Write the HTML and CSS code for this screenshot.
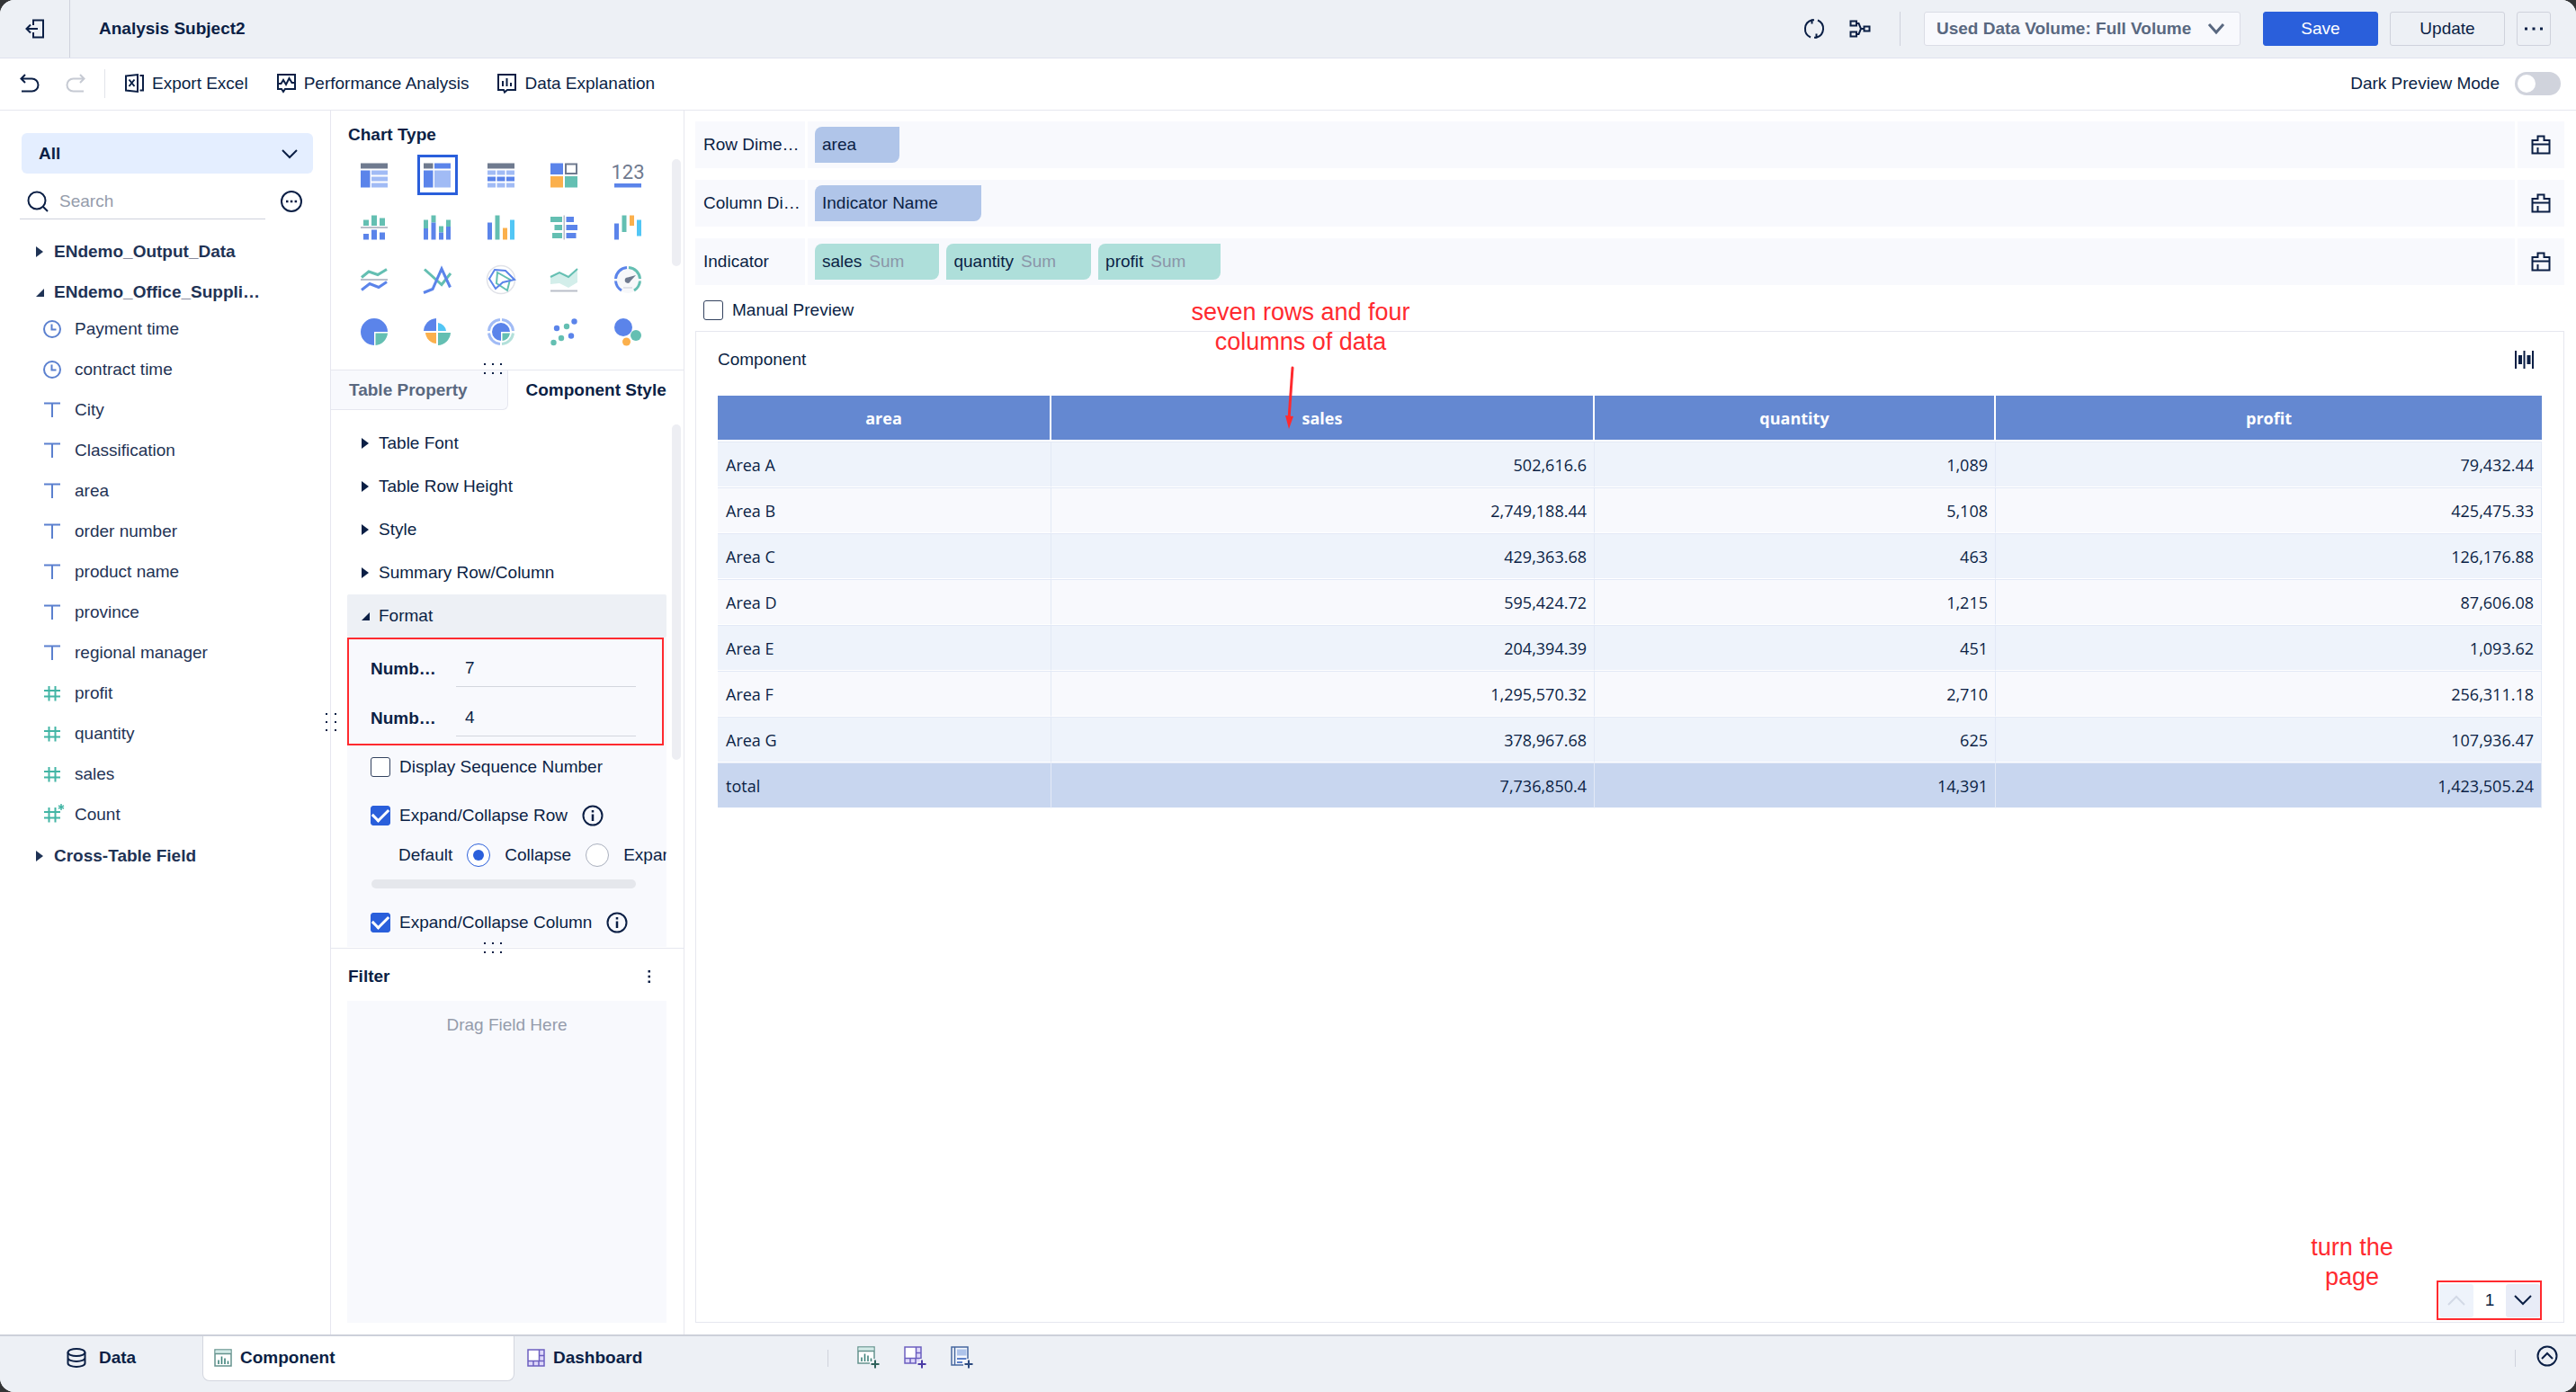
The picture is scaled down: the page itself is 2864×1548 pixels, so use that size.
FILE: index.html
```html
<!DOCTYPE html>
<html lang="en">
<head>
<meta charset="utf-8">
<title>Analysis Subject2</title>
<link rel="stylesheet" href="styles.css">
</head>
<body>
<div class="app">
  <header class="topbar">
    <button class="icon-btn exit" aria-label="Exit"><svg class="ic" width="22" height="22" viewBox="0 0 22 22"><path d="M9 7V1.500H20V20.500H9V15M14 11H1.500M6 6.500L1.500 11L6 15.500"/></svg></button>
    <h1 class="title">Analysis Subject2</h1>
    <div class="topbar-actions">
      <button class="icon-btn" aria-label="Refresh"><svg class="ic" width="24" height="24" viewBox="0 0 24 24"><path d="M9.500 6.500V2.200A10.300 10.300 0 0 0 8 21.500M14.500 17.500V21.800A10.300 10.300 0 0 0 16 2.500M9.500 2.200H12M14.500 21.800H12"/></svg></button>
      <button class="icon-btn flow" aria-label="Lineage"><svg class="ic" width="24" height="24" viewBox="0 0 24 24"><path d="M1.500 3.500H8V8.500H1.500ZM1.500 15.500H8V20.500H1.500ZM16.500 9.500H22.500V14.500H16.500ZM8 6H10.500L13 12H16.500M8 18H10.500L13 12"/></svg></button>
      <span class="vline"></span>
      <span class="select volume">
        <select aria-label="Used data volume"><option>Used Data Volume: Full Volume</option></select>
        <svg class="ic chev" width="20" height="20" viewBox="0 0 20 20"><path d="M2 5L10 14L18 5"/></svg>
      </span>
      <button class="btn primary">Save</button>
      <button class="btn">Update</button>
      <button class="btn more" aria-label="More"><svg width="20" height="4" viewBox="0 0 20 4"><path fill="currentColor" d="M0 .500h3v3H0zM8.500 .500h3v3h-3zM17 .500h3v3h-3z"/></svg></button>
    </div>
  </header>

  <div class="toolbar">
    <button class="icon-btn" aria-label="Undo"><svg class="ic" width="22" height="22" viewBox="0 0 22 22"><path d="M6 1L1.500 5.500L6 10M1.500 5.500H13.500A6.500 6.500 0 0 1 13.500 19.500H2"/></svg></button>
    <button class="icon-btn redo" aria-label="Redo" disabled><svg class="ic" width="22" height="22" viewBox="0 0 22 22"><path d="M16 1L20.500 5.500L16 10M20.500 5.500H8.500A6.500 6.500 0 0 0 8.500 19.500H20"/></svg></button>
    <span class="vline"></span>
    <button class="tool"><svg class="ic" width="21" height="21" viewBox="0 0 21 21"><path d="M1 2.500L14 1V20L1 18.500ZM16.500 2H20V18.500H16.500M4.500 6.500L10.500 14M10.500 6.500L4.500 14"/></svg>Export Excel</button>
    <button class="tool"><svg class="ic" width="21" height="21" viewBox="0 0 21 21"><path d="M1 1H20V17H9L7 20L5 17H1ZM1 11H4.500L7 7L10 12L13.500 5L16.500 10H20"/></svg>Performance Analysis</button>
    <button class="tool"><svg class="ic" width="21" height="21" viewBox="0 0 21 21"><path d="M1 1H20V18H11L8 20.500L7 18H1ZM6 8V14M10.500 5V14M15 10V14"/></svg>Data Explanation</button>
    <label class="dark-mode">Dark Preview Mode<input type="checkbox" role="switch" class="switch"></label>
  </div>

  <div class="workspace">
    <aside class="fields-panel">
      <span class="select all">
        <select aria-label="Data source"><option>All</option></select>
        <svg class="ic chev" width="20" height="20" viewBox="0 0 20 20"><path d="M2 6L10 14L18 6"/></svg>
      </span>
      <div class="search-row">
        <label class="search"><svg class="ic" width="24" height="24" viewBox="0 0 24 24"><circle cx="11" cy="11" r="9.500"/><path d="M18 18L23 23"/></svg><input type="text" placeholder="Search" aria-label="Search"></label>
        <button class="icon-btn" aria-label="More"><svg class="ic" width="24" height="24" viewBox="0 0 24 24"><circle cx="12" cy="12" r="11"/><path d="M6 12h2.500M10.800 12h2.500M15.600 12h2.500" stroke-width="2.500"/></svg></button>
      </div>
      <div class="tree">
        <div class="group"><button class="node"><i class="caret"></i>ENdemo_Output_Data</button></div>
        <div class="group">
          <button class="node"><i class="caret open"></i>ENdemo_Office_Suppli…</button>
          <ul class="fields">
            <li><svg class="ic date"><use href="#i-clock"/></svg>Payment time</li>
            <li><svg class="ic date"><use href="#i-clock"/></svg>contract time</li>
            <li><svg class="ic text"><use href="#i-text"/></svg>City</li>
            <li><svg class="ic text"><use href="#i-text"/></svg>Classification</li>
            <li><svg class="ic text"><use href="#i-text"/></svg>area</li>
            <li><svg class="ic text"><use href="#i-text"/></svg>order number</li>
            <li><svg class="ic text"><use href="#i-text"/></svg>product name</li>
            <li><svg class="ic text"><use href="#i-text"/></svg>province</li>
            <li><svg class="ic text"><use href="#i-text"/></svg>regional manager</li>
            <li><svg class="ic num"><use href="#i-hash"/></svg>profit</li>
            <li><svg class="ic num"><use href="#i-hash"/></svg>quantity</li>
            <li><svg class="ic num"><use href="#i-hash"/></svg>sales</li>
            <li><svg class="ic num"><use href="#i-hash"/><path d="M20 -2V5M17 0L23 3M23 0L17 3" stroke-width="1.500"/></svg>Count</li>
          </ul>
        </div>
        <div class="group"><button class="node"><i class="caret"></i>Cross-Table Field</button></div>
      </div>
    </aside>

    <section class="config-panel">
      <svg class="grip side" width="14" height="20" viewBox="0 0 14 20"><path d="M1 0h2v2H1zM11 0h2v2h-2zM1 9h2v2H1zM11 9h2v2h-2zM1 18h2v2H1zM11 18h2v2h-2z"/></svg>
      <div class="charts">
        <h2>Chart Type</h2>
        <div class="chart-grid">
          <button aria-label="Group table"><svg viewBox="0 0 30 30"><path fill="#6f7a8f" d="M0 1.500h30v6H0z"/><path fill="#5b84ea" d="M0 9.500h10.500v19H0z"/><path fill="#a1bbf5" d="M12 9.500h18v5H12zM12 16.500h18v5H12zM12 23.500h18v5H12z"/></svg></button>
          <button class="selected" aria-label="Cross table"><svg viewBox="0 0 30 30"><path fill="#6f7a8f" d="M0 1.500h10.500v6H0z"/><path fill="#5b84ea" d="M12 1.500h18v6H12zM0 9.500h10.500v19H0z"/><path fill="#a1bbf5" d="M12 9.500h18v19H12z"/></svg></button>
          <button aria-label="Detail table"><svg viewBox="0 0 30 30"><path fill="#6f7a8f" d="M0 1.500h30v6H0z"/><path fill="#a1bbf5" d="M0 9.500h9v5H0zM10.500 9.500h9v5h-9zM21 9.500h9v5h-9zM0 23.500h9v5H0zM10.500 23.500h9v5h-9zM21 23.500h9v5h-9z"/><path fill="#5b84ea" d="M0 16.500h9v5H0zM10.500 16.500h9v5h-9zM21 16.500h9v5h-9z"/></svg></button>
          <button aria-label="Color table"><svg viewBox="0 0 30 30"><path fill="#5b84ea" d="M0 1.500h14v12.500H0z"/><path fill="none" stroke="#6f7a8f" stroke-width="2" d="M17 2.500h12v10.500H17z"/><path fill="#fbb04c" d="M0 16h14v12.500H0z"/><path fill="#64bfb2" d="M16 16h14v12.500H16z"/></svg></button>
          <button aria-label="KPI card"><svg viewBox="0 0 30 30"><text x="15" y="19" text-anchor="middle" class="kpi">123</text><path fill="#5b84ea" d="M0 24h30v4.500H0z"/></svg></button>

          <button aria-label="Multi-series column"><svg viewBox="0 0 30 30"><path fill="#64bfb2" d="M3 6.500h6v6.500H3zM12 1.500h6V13h-6zM21 4.500h6V13h-6z"/><path fill="#b9bec9" d="M0 14h30v2H0z"/><path fill="#5b84ea" d="M3 22h6v6.500H3zM12 17.500h6v11h-6zM21 20.500h6v8h-6z"/></svg></button>
          <button aria-label="Stacked column"><svg viewBox="0 0 30 30"><path fill="#64bfb2" d="M0 6.500h5V16H0zM8.500 1.500h5V9.500h-5zM17 13.500h5V20.500h-5zM25 6.500h5V14h-5z"/><path fill="#5b84ea" d="M0 16h5v12.500H0zM8.500 9.500h5v19h-5zM17 20.500h5v8h-5zM25 14h5v14.500h-5z"/></svg></button>
          <button aria-label="Column"><svg viewBox="0 0 30 30"><path fill="#5b84ea" d="M0 9.500h5v19H0z"/><path fill="#64bfb2" d="M8.500 1.500h5v27h-5z"/><path fill="#fbb04c" d="M17 15.500h5v13h-5z"/><path fill="#52c6f5" d="M25 6.500h5v22h-5z"/></svg></button>
          <button aria-label="Butterfly bar"><svg viewBox="0 0 30 30"><path fill="#64bfb2" d="M0 3h13v6H0zM4.500 12H13v6H4.500zM2 21h11v6H2z"/><path fill="#b9bec9" d="M14.500 1.500h1.500v27h-1.500z"/><path fill="#5b84ea" d="M17.500 3H26v6h-8.500zM17.500 12H30v6H17.500zM17.500 21H28.500v6h-11z"/></svg></button>
          <button aria-label="Waterfall"><svg viewBox="0 0 30 30"><path fill="#5b84ea" d="M0 10.500h5v18H0z"/><path fill="#64bfb2" d="M8.500 1.500h5v18.500h-5z"/><path fill="#fbb04c" d="M17 1.500h5V13h-5z"/><path fill="#52c6f5" d="M25 6.500h5v18h-5z"/></svg></button>

          <button aria-label="Multi-series line"><svg class="draw" viewBox="0 0 30 30"><path stroke="#64bfb2" d="M1 12.500L9 6L19 9.500L29 3.500"/><path stroke="#b9bec9" stroke-width="2" d="M0 15h30"/><path stroke="#5b84ea" d="M1 26.500L10 19.500L20 23.500L29 17.500"/></svg></button>
          <button aria-label="Line"><svg class="draw" viewBox="0 0 30 30"><path stroke="#64bfb2" d="M1 3.500L20 20.500L30 8"/><path stroke="#5b84ea" d="M0 29.500L10 25.500L20 3L29.500 23.500"/></svg></button>
          <button aria-label="Radar"><svg class="draw" viewBox="0 0 30 30"><circle cx="15" cy="15" r="15.500" stroke="#e0e2e8" stroke-width="1.500"/><path stroke="#64bfb2" stroke-width="2" d="M11 7L25 15L22 27L10 19Z"/><path stroke="#5b84ea" stroke-width="2" d="M8 4L20 5L30 15L17 18L9 25L2 14Z"/></svg></button>
          <button aria-label="Area"><svg class="draw" viewBox="0 0 30 30"><path fill="#d3eeea" d="M0 12L10 7L20 12L30 3V18L20 24L10 19L0 20Z"/><path stroke="#64bfb2" stroke-width="2" d="M0 12L10 7L20 12L30 3"/><path stroke="#b9bec9" stroke-width="2" d="M0 27.500h30"/></svg></button>
          <button aria-label="Gauge"><svg class="draw" viewBox="0 0 30 30"><circle cx="15" cy="15" r="15" fill="#f7f8fa"/><path stroke="#5b84ea" d="M14 1.500A13.500 13.500 0 0 0 1.500 14M1.500 16.500A13.500 13.500 0 0 0 8 27"/><path stroke="#64bfb2" d="M16 1.500A13.500 13.500 0 0 1 28.500 14M28.500 16.500A13.500 13.500 0 0 1 22 27"/><path fill="#6f7a8f" d="M24 10L18 16.500A3.200 3.200 0 1 1 15 12.500Z"/><path stroke="#dfe2e8" stroke-width="2" d="M10 24h10"/></svg></button>

          <button aria-label="Pie"><svg viewBox="0 0 30 30"><path fill="#5b84ea" d="M15 0A15 15 0 0 0 15 30V15H30A15 15 0 0 0 15 0Z"/><path fill="#64bfb2" d="M16.500 16.500H30A15 15 0 0 1 16.500 30Z"/></svg></button>
          <button aria-label="Rose"><svg viewBox="0 0 30 30"><path fill="#5b84ea" d="M14 0A15 15 0 0 0 0 14H14Z"/><path fill="#52c6f5" d="M16 5A10 10 0 0 1 25 14H16Z"/><path fill="#fbb04c" d="M2 16H14V28A13 13 0 0 1 2 16Z"/><path fill="#64bfb2" d="M16 16H30A15 15 0 0 1 16 30Z"/></svg></button>
          <button aria-label="Multi-layer pie"><svg class="draw" viewBox="0 0 30 30"><path stroke="#a1bbf5" d="M14 1.500A13.500 13.500 0 0 0 1.500 14M1.500 16.500A13.500 13.500 0 0 0 14 28.500M16 1.500A13.500 13.500 0 0 1 28.500 14"/><path stroke="#b3e0da" d="M28.500 16.500A13.500 13.500 0 0 1 16 28.500"/><path fill="#5b84ea" d="M15 5A10 10 0 0 0 15 25V15H25A10 10 0 0 0 15 5Z"/><path fill="#64bfb2" d="M16.500 16.500H25A10 10 0 0 1 16.500 25Z"/></svg></button>
          <button aria-label="Scatter"><svg viewBox="0 0 30 30"><g fill="#5b84ea"><circle cx="7" cy="11" r="3.200"/><circle cx="26.500" cy="3.500" r="3.200"/><circle cx="23" cy="19.500" r="3.200"/></g><g fill="#64bfb2"><circle cx="18" cy="9" r="3.200"/><circle cx="12" cy="22" r="3.200"/><circle cx="3.500" cy="27" r="3.200"/></g></svg></button>
          <button aria-label="Bubble"><svg viewBox="0 0 30 30"><circle cx="10" cy="10" r="10" fill="#5b84ea"/><circle cx="24" cy="19" r="6" fill="#64bfb2"/><circle cx="13.500" cy="26" r="4.500" fill="#fbb04c"/></svg></button>
        </div>
        <span class="scroll charts-scroll"></span>
        <svg class="grip" width="22" height="14" viewBox="0 0 22 14"><path d="M1 1h2v2H1zM10 1h2v2h-2zM19 1h2v2h-2zM1 11h2v2H1zM10 11h2v2h-2zM19 11h2v2h-2z"/></svg>
      </div>

      <div class="tabs">
        <button class="tab">Table Property</button>
        <button class="tab active">Component Style</button>
      </div>

      <div class="settings">
        <button class="section"><i class="caret"></i>Table Font</button>
        <button class="section"><i class="caret"></i>Table Row Height</button>
        <button class="section"><i class="caret"></i>Style</button>
        <button class="section"><i class="caret"></i>Summary Row/Column</button>
        <button class="section current"><i class="caret open"></i>Format</button>
        <div class="section-body">
          <label class="number">Numb…<input type="text" value="7"></label>
          <label class="number">Numb…<input type="text" value="4"></label>
          <div class="option"><label><input type="checkbox">Display Sequence Number</label></div>
          <div class="option"><label><input type="checkbox" checked>Expand/Collapse Row</label><svg class="ic info"><use href="#i-info"/></svg></div>
          <div class="default-row">
            <span>Default</span>
            <label><input type="radio" name="def" checked>Collapse</label>
            <label><input type="radio" name="def">Expand</label>
          </div>
          <div class="hscroll"></div>
          <div class="option"><label><input type="checkbox" checked>Expand/Collapse Column</label><svg class="ic info"><use href="#i-info"/></svg></div>
          <span class="mark-box"></span>
        </div>
        <span class="scroll settings-scroll"></span>
      </div>

      <div class="filter">
        <svg class="grip top" width="22" height="14" viewBox="0 0 22 14"><path d="M1 1h2v2H1zM10 1h2v2h-2zM19 1h2v2h-2zM1 11h2v2H1zM10 11h2v2h-2zM19 11h2v2h-2z"/></svg>
        <div class="filter-head"><h2>Filter</h2><button class="icon-btn" aria-label="Filter options"><svg width="4" height="14" viewBox="0 0 4 14"><path fill="currentColor" d="M.500 0h2.500v2.500h-2.500zM.500 5.700h2.500v2.500h-2.500zM.500 11.500h2.500v2.500h-2.500z"/></svg></button></div>
        <div class="drop">Drag Field Here</div>
      </div>
    </section>

    <main class="canvas">
      <div class="shelves">
        <div class="shelf"><span class="shelf-name">Row Dime…</span><div class="chips"><span class="chip dim">area</span></div><button class="shelf-clear" aria-label="Clear row dimension"><svg class="ic"><use href="#i-brush"/></svg></button></div>
        <div class="shelf"><span class="shelf-name">Column Di…</span><div class="chips"><span class="chip dim">Indicator Name</span></div><button class="shelf-clear" aria-label="Clear column dimension"><svg class="ic"><use href="#i-brush"/></svg></button></div>
        <div class="shelf"><span class="shelf-name">Indicator</span><div class="chips"><span class="chip ind">sales<em>Sum</em></span><span class="chip ind">quantity<em>Sum</em></span><span class="chip ind">profit<em>Sum</em></span></div><button class="shelf-clear" aria-label="Clear indicator"><svg class="ic"><use href="#i-brush"/></svg></button></div>
      </div>
      <label class="manual"><input type="checkbox">Manual Preview</label>

      <section class="card">
        <div class="card-head">
          <h3>Component</h3>
          <button class="icon-btn" aria-label="Fit columns"><svg width="22" height="22" viewBox="0 0 22 22"><path fill="currentColor" d="M0 1h2v20H0zM4 6h4v10H4zM9.500 1h2v20h-2zM13.500 6h4v10h-4zM19 1h2v20h-2z"/></svg></button>
        </div>
        <table>
          <colgroup><col class="c-area"><col class="c-sales"><col class="c-qty"><col class="c-profit"></colgroup>
          <thead><tr><th>area</th><th>sales</th><th>quantity</th><th>profit</th></tr></thead>
          <tbody>
            <tr><td>Area A</td><td>502,616.6</td><td>1,089</td><td>79,432.44</td></tr>
            <tr><td>Area B</td><td>2,749,188.44</td><td>5,108</td><td>425,475.33</td></tr>
            <tr><td>Area C</td><td>429,363.68</td><td>463</td><td>126,176.88</td></tr>
            <tr><td>Area D</td><td>595,424.72</td><td>1,215</td><td>87,606.08</td></tr>
            <tr><td>Area E</td><td>204,394.39</td><td>451</td><td>1,093.62</td></tr>
            <tr><td>Area F</td><td>1,295,570.32</td><td>2,710</td><td>256,311.18</td></tr>
            <tr><td>Area G</td><td>378,967.68</td><td>625</td><td>107,936.47</td></tr>
          </tbody>
          <tfoot><tr><td>total</td><td>7,736,850.4</td><td>14,391</td><td>1,423,505.24</td></tr></tfoot>
        </table>
        <nav class="pager">
          <button class="prev" aria-label="Previous page" disabled><svg class="ic" width="20" height="20" viewBox="0 0 20 20"><path d="M1 15L10 6L19 15"/></svg></button>
          <span>1</span>
          <button aria-label="Next page"><svg class="ic" width="20" height="20" viewBox="0 0 20 20"><path d="M1 5L10 14L19 5"/></svg></button>
        </nav>
        <p class="note note-data">seven rows and four<br>columns of data</p>
        <svg class="note-arrow" width="14" height="72" viewBox="0 0 14 72"><path d="M9 3L5 60" stroke="#ff2a2f" stroke-width="3" stroke-linecap="round"/><path d="M1 56L10 57L5 71Z" fill="#ff2a2f"/></svg>
        <p class="note note-page">turn the<br>page</p>
      </section>
    </main>
  </div>

  <footer class="bottombar">
    <button class="sheet data"><svg class="ic" width="22" height="22" viewBox="0 0 22 22"><ellipse cx="11" cy="5" rx="9.500" ry="4"/><path d="M1.500 5V17C1.500 19.500 6 21 11 21S20.500 19.500 20.500 17V5M1.500 11C1.500 13.500 6 15 11 15S20.500 13.500 20.500 11"/></svg>Data</button>
    <button class="sheet active"><svg width="20" height="20" viewBox="0 0 20 20"><use href="#i-comp"/></svg>Component</button>
    <button class="sheet"><svg width="20" height="20" viewBox="0 0 20 20"><use href="#i-dash"/></svg>Dashboard</button>
    <span class="vline"></span>
    <div class="adders">
      <button class="icon-btn" aria-label="Add component"><svg width="25" height="25" viewBox="0 0 25 25"><svg width="20" height="20"><use href="#i-comp"/></svg><path d="M20 14V25M14 20H25" stroke="#edf0f5" stroke-width="5"/><path d="M20 15.500V24.500M15.500 20H24.500" stroke="#2f625c" stroke-width="2"/></svg></button>
      <button class="icon-btn" aria-label="Add dashboard"><svg width="25" height="25" viewBox="0 0 25 25"><svg width="20" height="20"><use href="#i-dash"/></svg><path d="M20 14V25M14 20H25" stroke="#edf0f5" stroke-width="5"/><path d="M20 15.500V24.500M15.500 20H24.500" stroke="#4a3aa5" stroke-width="2"/></svg></button>
      <button class="icon-btn" aria-label="Add report"><svg width="25" height="25" viewBox="0 0 25 25"><path d="M1 1H19V21H1Z" fill="#f4f7fd" stroke="#45679f" stroke-width="1.500"/><path d="M4.500 1V21" stroke="#45679f" stroke-width="1.500"/><path d="M7 3.500h10.500v7H7z" fill="#adc3ea"/><path d="M7 14h10.500M7 18h6" stroke="#5b7fc7" stroke-width="2"/><path d="M20 14V25M14 20H25" stroke="#edf0f5" stroke-width="5"/><path d="M20 15.500V24.500M15.500 20H24.500" stroke="#2c4a80" stroke-width="2"/></svg></button>
    </div>
    <span class="vline last"></span>
    <button class="icon-btn collapse" aria-label="Collapse"><svg class="ic" width="24" height="24" viewBox="0 0 24 24"><circle cx="12" cy="12" r="10.500"/><path d="M6 15L12 9L18 15"/></svg></button>
  </footer>
</div>

<svg class="sprite" width="0" height="0">
  <symbol id="i-clock" viewBox="0 0 20 20"><circle cx="10" cy="10" r="9"/><path d="M9.500 4.500V10.500H14.500"/></symbol>
  <symbol id="i-text" viewBox="0 0 20 20"><path d="M1 2.500H19M10 2.500V18"/></symbol>
  <symbol id="i-hash" viewBox="0 0 20 20"><path d="M1 7H19M1 13.500H19M6.500 2V18.500M13.500 2V18.500"/></symbol>
  <symbol id="i-info" viewBox="0 0 24 24"><circle cx="12" cy="12" r="10.500"/><path d="M12 10.500V18M12 6V8.500" stroke-width="2.500"/></symbol>
  <symbol id="i-brush" viewBox="0 0 22 22"><path d="M1.500 20.500V6H7.500V1.500H14.500V6H20.500V20.500ZM1.500 10.500H20.500M7.500 14V20.500"/></symbol>
  <symbol id="i-comp" viewBox="0 0 20 20"><path d="M1 1H19V19H1Z" fill="#fff" stroke="#64928d" stroke-width="1.500"/><path d="M1.500 1.500h17v3.500h-17z" fill="#d3ebe8"/><path d="M1 5.500H19" stroke="#64928d" stroke-width="1.500"/><path d="M5 12.500V17M8.500 8.500V17M12 10.500V17M15.500 13.500V17" stroke="#3f827b" stroke-width="1.600"/></symbol>
  <symbol id="i-dash" viewBox="0 0 20 20"><path d="M1 1H19V19H1Z" fill="#ded8fa"/><path d="M1 1H13V13H1Z" fill="#fff"/><path d="M1 1H19V19H1ZM13.500 1V13.500M1 13.500H19M13.500 7.500H19M7 13.500V19M13 13.500V19" fill="none" stroke="#6c5fc0" stroke-width="1.500"/></symbol>
</svg>
</body>
</html>
```
FILE: styles.css
```css
* { box-sizing: border-box; }

:root {
  --ink: #0b1f45;
  --blue: #2a5fdb;
  --line: #e6e7ef;
  --bar: #edf0f5;
  --soft: #f8f9fd;
  --red: #ff2a2f;
}

body {
  margin: 0;
  background: #333436;
  color: var(--ink);
  font: 19px/22px "Liberation Sans", Arial, sans-serif;
}

button, input, select { font: inherit; color: inherit; margin: 0; }
button { border: 0; padding: 0; background: none; }
h1, h2, h3, p, ul { margin: 0; padding: 0; }
h1, h2 { font-size: 19px; font-weight: 700; }
h3 { font-size: 19px; font-weight: 400; }
ul { list-style: none; }
svg { display: block; flex: none; }
.ic { fill: none; stroke: currentColor; stroke-width: 2; overflow: visible; }
.sprite { position: absolute; }

.app {
  min-height: 100vh;
  display: flex;
  flex-direction: column;
  background: #fff;
  border-radius: 16px;
  overflow: hidden;
}

.icon-btn { display: flex; align-items: center; justify-content: center; }
.vline { width: 1px; background: #cfd2dc; flex: none; }

/* Top bar */
.topbar {
  display: flex;
  align-items: center;
  height: 65px;
  background: var(--bar);
  border-bottom: 1px solid #dfe2ee;
}
.exit { width: 78px; align-self: stretch; border-right: 1px solid #cfd2dc; }
.title { padding-left: 32px; }
.topbar-actions { display: flex; align-items: center; margin-left: auto; padding-right: 28px; }
.topbar-actions .flow { margin-left: 27px; }
.topbar-actions .vline { height: 38px; margin: 0 26px 0 32px; }

.select { position: relative; display: flex; align-items: center; }
.select select { width: 100%; height: 100%; appearance: none; border: 0; background: none; font-weight: 700; }
.select .chev { position: absolute; right: 16px; pointer-events: none; }
.volume { width: 352px; height: 38px; margin-right: 25px; border: 1px solid #dbdde6; border-radius: 3px; background: var(--soft); color: #596880; }
.volume select { padding-left: 13px; }
.volume .chev { stroke-width: 3; }

.btn { width: 128px; height: 38px; margin-right: 13px; border: 1px solid #cfd2dc; border-radius: 3px; }
.btn.primary { border-color: var(--blue); background: var(--blue); color: #fff; }
.btn.more { width: 38px; margin-right: 0; display: flex; align-items: center; justify-content: center; }

/* Toolbar */
.toolbar { display: flex; align-items: center; height: 58px; padding: 0 17px 2px 22px; border-bottom: 1px solid var(--line); }
.toolbar .redo { margin-left: 29px; color: #c6cad3; }
.toolbar .vline { height: 32px; margin: 0 22px 0 21px; background: #e2e4ea; }
.tool { display: flex; align-items: center; gap: 9px; margin-right: 32px; }
.dark-mode { display: flex; align-items: center; gap: 17px; margin-left: auto; }
.switch { appearance: none; width: 51px; height: 26px; border-radius: 13px; background: #d0d3dc; padding: 3px; display: flex; }
.switch::before { content: ""; width: 20px; height: 20px; border-radius: 50%; background: #fff; }

.workspace { flex: 1; display: flex; }

/* Field tree */
.fields-panel { width: 367px; flex: none; padding: 25px 19px 0 22px; }
.all { height: 45px; margin-left: 2px; border-radius: 6px; background: #e4eeff; }
.all select { padding-left: 19px; }
.search-row { display: flex; align-items: center; margin-top: 11px; }
.search { display: flex; align-items: center; gap: 12px; width: 273px; height: 40px; margin-right: 17px; padding-left: 8px; border-bottom: 1px solid #cfd2dc; }
.search input { flex: 1; min-width: 0; border: 0; outline: 0; padding: 0; background: none; }
.search input::placeholder { color: #959cab; }
.tree { margin-top: 18px; padding-left: 18px; color: #1f3355; }
.group + .group { margin-top: 9px; }
.node { display: flex; align-items: center; height: 36px; font-weight: 700; }
.caret { width: 20px; flex: none; color: inherit; }
.caret::before { content: ""; display: block; width: 0; height: 0; border: 6px solid transparent; border-left: 8px solid currentColor; border-right: 0; }
.caret.open::before { border: 0; border-bottom: 9px solid currentColor; border-left: 9px solid transparent; }
.fields { margin-bottom: -3px; }
.fields li { display: flex; align-items: center; gap: 15px; height: 45px; padding-left: 8px; }
.fields .ic { width: 20px; height: 20px; }
.date, .text { color: #5b80cf; }
.num { color: #43b5a5; }

/* Chart type, style settings and filter */
.config-panel { position: relative; width: 394px; flex: none; display: flex; flex-direction: column; border: 1px solid var(--line); border-width: 0 1px; }
.grip { position: absolute; z-index: 1; left: 169px; bottom: -6px; fill: var(--ink); }
.grip.side { left: -7px; top: 50%; bottom: auto; margin-top: -11px; }
.grip.top { top: -8px; bottom: auto; }
.scroll { position: absolute; right: 3px; width: 10px; border-radius: 5px; background: #edeef3; }

.charts { position: relative; padding: 16px 40px 20px 25px; border-bottom: 1px solid var(--line); }
.charts h2 { margin-left: -6px; }
.charts-scroll { top: 54px; height: 119px; }
.chart-grid { display: grid; grid-template-columns: repeat(5, 45px); justify-content: space-between; row-gap: 13px; margin-top: 11px; }
.chart-grid button { height: 45px; display: flex; align-items: center; justify-content: center; border: 3px solid transparent; }
.chart-grid .selected { border-color: var(--blue); }
.chart-grid svg { width: 30px; height: 30px; overflow: visible; }
.draw { fill: none; stroke-width: 3; }
.kpi { font: 22px Roboto, sans-serif; fill: #6f7a8f; }

.tabs { display: flex; height: 44px; }
.tab { flex: 1; text-align: left; font-weight: 700; padding-left: 20px; }
.tab:not(.active) { color: #5a6880; background: var(--soft); border: 1px solid var(--line); border-width: 0 1px 1px 0; border-bottom-right-radius: 6px; }

.settings { position: relative; height: 598px; overflow: hidden; padding: 13px 19px 0 18px; }
.settings-scroll { top: 16px; height: 373px; }
.section { display: flex; align-items: center; width: 100%; height: 48px; padding-left: 16px; }
.section .caret { width: 19px; }
.section.current { background: var(--bar); border-radius: 2px; }
.section-body { position: relative; padding: 7px 0 0 26px; background: var(--soft); overflow: hidden; }
.mark-box { position: absolute; left: 0; top: 0; width: 352px; height: 120px; border: 2px solid var(--red); pointer-events: none; }
.number { display: flex; align-items: center; justify-content: space-between; height: 55px; padding-right: 34px; font-weight: 700; }
.number input { width: 200px; height: 41px; padding: 0 10px; border: 0; border-bottom: 1px solid #d3d6de; background: none; font-weight: 400; }
.option { display: flex; align-items: center; gap: 16px; height: 54px; }
.option label, .manual, .default-row label { display: flex; align-items: center; }
.info { width: 24px; height: 24px; }

input[type="checkbox"]:not(.switch) { appearance: none; flex: none; width: 22px; height: 22px; margin-right: 10px; border: 1px solid #33425f; border-radius: 3px; background: #fff; display: flex; align-items: center; justify-content: center; }
input[type="checkbox"]:not(.switch):checked { border-color: var(--blue); background: var(--blue); }
input[type="checkbox"]:not(.switch):checked::before { content: ""; width: 15px; height: 8px; margin-bottom: 5px; border: solid #fff; border-width: 0 0 3px 3px; transform: rotate(-45deg); }
input[type="radio"] { appearance: none; flex: none; width: 26px; height: 26px; margin: 0 16px; border: 1px solid #a9afbd; border-radius: 50%; background: #fff; display: flex; align-items: center; justify-content: center; }
input[type="radio"]:checked { border-color: var(--blue); }
input[type="radio"]:checked::before { content: ""; width: 12px; height: 12px; border-radius: 50%; background: var(--blue); }
.default-row { display: flex; align-items: center; height: 34px; padding-left: 31px; white-space: nowrap; overflow: hidden; }
.hscroll { height: 10px; margin: 10px 34px 11px 1px; border-radius: 5px; background: #e5e7ec; }

.filter { position: relative; flex: 1; display: flex; flex-direction: column; padding: 0 19px 13px 18px; border-top: 1px solid var(--line); }
.filter-head { display: flex; align-items: center; justify-content: space-between; height: 58px; padding: 3px 17px 0 1px; }
.drop { flex: 1; padding-top: 16px; background: var(--soft); color: #959cab; text-align: center; }

/* Canvas */
.canvas { flex: 1; min-width: 0; display: flex; flex-direction: column; padding: 12px 13px 13px 12px; }
.shelves { display: grid; row-gap: 13px; }
.shelf { display: flex; height: 52px; gap: 3px; }
.shelf > * { background: var(--soft); }
.shelf-name { width: 122px; padding-left: 9px; line-height: 52px; white-space: nowrap; }
.chips { flex: 1; display: flex; align-items: center; gap: 8px; padding-left: 8px; }
.chip { height: 40px; line-height: 40px; padding: 0 48px 0 8px; border-radius: 8px 0; }
.chip.dim { background: #b0c5e9; }
.chip.ind { background: #aedfda; padding-right: 39px; }
.chip em { margin-left: 8px; font-style: normal; color: #8a95a8; }
.shelf-clear { width: 52px; display: flex; align-items: center; justify-content: center; }
.shelf-clear .ic { width: 22px; height: 22px; }
.manual { height: 51px; padding: 5px 0 0 9px; }

.card { position: relative; flex: 1; display: flex; flex-direction: column; padding: 0 24px; border: 1px solid var(--line); }
.card-head { display: flex; align-items: center; justify-content: space-between; height: 61px; margin-bottom: 10px; padding-right: 8px; }

table { width: 100%; table-layout: fixed; border-collapse: separate; border-spacing: 0; font: 18px/24px "Open Sans", "Noto Sans", sans-serif; }
.c-area { width: 371px; }
.c-sales { width: 604px; }
.c-qty { width: 446px; }
.c-profit { width: 607px; }
th { height: 51px; padding: 0; background: #6488d1; color: #fff; font-weight: 700; border: solid #fff; border-width: 0 2px 2px 0; }
th:last-child { border-right: 0; }
td { height: 51px; padding: 0 8px; text-align: right; border: 1px solid #e3e9f6; border-left: 0; border-bottom-color: #fff; }
td:first-child { text-align: left; padding-left: 9px; }
tbody tr:nth-child(odd) { background: #eef3fb; }
tbody tr:nth-child(even) { background: #f8f9fd; }
tfoot tr { background: #c8d6ef; }

.pager { display: flex; align-items: center; justify-content: space-between; width: 117px; height: 44px; margin: auto 0 2px auto; padding: 1px 0 1px 1px; border: 2px solid var(--red); }
.pager button { width: 38px; height: 37px; border-radius: 3px; background: #e8ecf7; display: flex; align-items: center; justify-content: center; }
.pager .prev { background: #eef3fb; color: #d3d9e6; }

.note { position: absolute; color: var(--red); font-size: 27px; line-height: 33px; text-align: center; white-space: nowrap; }
.note-data { left: 542px; top: -38px; width: 260px; }
.note-arrow { position: absolute; left: 654px; top: 37px; }
.note-page { right: 180px; bottom: 33px; width: 110px; }

/* Bottom bar */
.bottombar { display: flex; align-items: flex-start; height: 64px; border-top: 2px solid #cdd0da; background: var(--bar); }
.sheet { display: flex; align-items: center; gap: 9px; width: 347px; height: 50px; padding: 0 0 2px 14px; font-weight: 700; }
.sheet.data { width: 225px; padding-left: 74px; gap: 14px; }
.sheet.active { padding-left: 12px; background: #fff; border: 1px solid #d3d6df; border-top: 0; border-radius: 0 0 8px 8px; }
.bottombar .vline { height: 19px; margin: 15px 0 0 1px; }
.adders { display: flex; gap: 27px; margin: 11px 0 0 32px; }
.bottombar .vline.last { margin-left: auto; }
.collapse { margin: 10px 20px 0 23px; }
```
